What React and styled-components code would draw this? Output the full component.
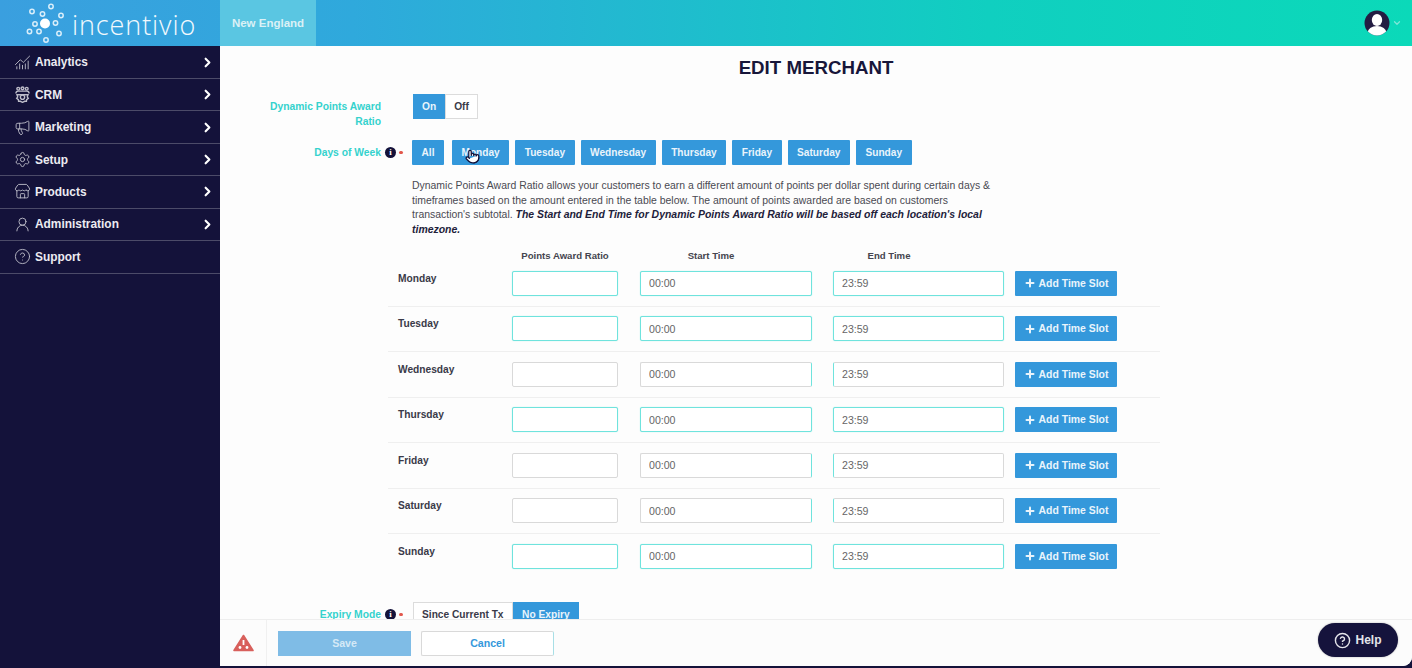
import React from 'react';
import styled, { createGlobalStyle } from 'styled-components';
import {
  ChartNoAxesCombined,
  ChevronDown,
  ChevronRight,
  CircleHelp,
  Megaphone,
  Plus,
  Pointer,
  Settings,
  Store,
  UserRound,
} from 'lucide-react';

const GlobalStyle = createGlobalStyle`
  html, body {
    margin: 0;
    padding: 0;
    height: 100%;
    overflow: hidden;
    background: #14123a;
    font-family: 'Liberation Sans', Arial, sans-serif;
  }
  * { box-sizing: border-box; }
`;

const Shell = styled.div`
  height: 100vh;
  display: flex;
  flex-direction: column;
  background: #14123a;
`;

const TopBar = styled.header`
  height: 46px;
  flex: none;
  display: flex;
  align-items: stretch;
  background: linear-gradient(90deg, #3a9fdf 0%, #2fa9dc 25%, #10cfc0 70%, #0bd9b9 100%);
`;

const LogoBox = styled.div`
  width: 220px;
  display: flex;
  align-items: center;
  padding-left: 24px;
  gap: 2px;
`;

const LogoText = styled.span`
  font-family: 'Open Sans', sans-serif;
  font-weight: 300;
  font-size: 27px;
  letter-spacing: 0.9px;
  color: #f2f9fd;
  position: relative;
  top: 1px;
`;

const RegionTab = styled.div`
  width: 96px;
  display: flex;
  align-items: center;
  justify-content: center;
  background: #5ac6e2;
  color: #dbf1f6;
  font-size: 11.5px;
  font-weight: 700;
`;

const UserMenu = styled.div`
  margin-left: auto;
  padding-right: 10px;
  display: flex;
  align-items: center;
  gap: 2px;
  color: #7fe6d8;
`;

const Body = styled.div`
  flex: 1;
  min-height: 0;
  display: flex;
`;

const Sidebar = styled.nav`
  width: 220px;
  flex: none;
  padding-top: 0.5px;
  background: #14123a;
`;

const NavItem = styled.div`
  height: 32.45px;
  display: flex;
  align-items: center;
  padding: 0 5px 0 14px;
  gap: 4px;
  border-bottom: 1px solid #4c4b68;
  color: #ecebf1;
  font-size: 11.9px;
  font-weight: 700;

  svg.lead {
    color: #bdbcc9;
    flex: none;
  }
`;

const NavLabel = styled.span`
  flex: 1;
`;

const Main = styled.main`
  flex: 1;
  min-width: 0;
  display: flex;
  flex-direction: column;
  position: relative;
  margin-bottom: 2px;
  background: #fdfdfd;
  border-bottom-right-radius: 9px;
  overflow: hidden;
`;

const Content = styled.div`
  flex: 1;
  min-height: 0;
  overflow: hidden;
  padding-top: 12px;
`;

const Title = styled.h1`
  margin: 0 0 16px;
  text-align: center;
  font-size: 18.7px;
  line-height: 20px;
  font-weight: 700;
  color: #17163a;
`;

const FieldRow = styled.div`
  display: grid;
  grid-template-columns: 161px 31px 1fr;
  margin-top: ${(p) => p.$before || 0}px;
  margin-bottom: ${(p) => p.$after || 0}px;
`;

const FieldLabel = styled.label`
  padding: 5px 0 0 45px;
  text-align: right;
  color: #35d2cd;
  font-size: 10.3px;
  font-weight: 700;
  line-height: 15px;
`;

const Marks = styled.div`
  display: flex;
  align-items: center;
  gap: 3px;
  padding-left: 4px;
  height: 25px;
`;

const InfoDot = styled.span`
  width: 11px;
  height: 11px;
  border-radius: 50%;
  background: #14123a;
  color: #fff;
  font-family: 'Liberation Serif', serif;
  font-size: 9px;
  font-weight: 700;
  line-height: 11px;
  text-align: center;
`;

const Required = styled.span`
  width: 3.5px;
  height: 3.5px;
  border-radius: 50%;
  background: #e2574c;
`;

const ButtonRow = styled.div`
  display: flex;
  gap: ${(p) => p.$gap || 0}px;
  margin-left: ${(p) => p.$inset || 0}px;
`;

const Segment = styled.div`
  height: 25px;
  display: flex;
  align-items: center;
  padding: 0 ${(p) => p.$pad || 9}px;
  font-size: 10.2px;
  font-weight: 700;
  background: ${(p) => (p.$active ? '#3498db' : '#fff')};
  color: ${(p) => (p.$active ? '#e9f4fb' : '#3a3a48')};
  border: 1px solid ${(p) => (p.$active ? '#3498db' : '#dcdcdc')};
`;

const DayButton = styled.div`
  position: relative;
  height: 25px;
  display: flex;
  align-items: center;
  padding: 0 9.5px;
  background: #3498db;
  border-radius: 1px;
  color: #e9f4fb;
  font-size: 10.15px;
  font-weight: 700;

  &:first-child {
    margin-right: 2px;
  }
`;

const HandCursor = styled.span`
  position: absolute;
  left: 13px;
  top: 9px;
  display: flex;
  color: #14123a;

  svg {
    fill: #fff;
  }
`;

const Intro = styled.p`
  margin: 14px 0 0 192px;
  width: 590px;
  font-size: 10.45px;
  line-height: 14.6px;
  color: #4a4a52;

  strong {
    font-style: italic;
    color: #22213a;
  }
`;

const Table = styled.div`
  margin: 11px 0 0 168px;
  width: 772px;
`;

const TableHead = styled.div`
  display: grid;
  grid-template-columns: 124px 106px 22px 172px 21px 171px;
  height: 13px;
  padding-top: 2px;
  align-items: center;
  color: #45454f;
  font-size: 9.6px;
  font-weight: 700;
`;

const HeadCell = styled.div`
  grid-column: ${(p) => p.$col};
  text-align: center;
  padding-right: ${(p) => p.$shift || 0}px;
`;

const DayRow = styled.div`
  height: 45.5px;
  padding-top: 9.5px;
  display: grid;
  grid-template-columns: 124px 106px 194px 192px 113px;
  align-items: start;
  border-bottom: 1px solid ${(p) => (p.$last ? 'transparent' : '#efefef')};
`;

const DayName = styled.div`
  padding: 1px 0 0 10px;
  color: #3a3a48;
  font-size: 10.2px;
  line-height: 14px;
  font-weight: 700;
`;

const Cell = styled.div`
  display: flex;
  justify-content: ${(p) => p.$align || 'flex-start'};
`;

const teal = '#6fe3dd';
const grey = '#d9d9d9';

const Field = styled.input`
  width: ${(p) => p.$width}px;
  height: 25px;
  padding: 0 8px;
  background: #fff;
  border: 1px solid ${grey};
  border-top-color: ${(p) => (p.$tone === 'on' ? teal : grey)};
  border-bottom-color: ${(p) => (p.$tone === 'on' ? teal : grey)};
  border-left-color: ${(p) => (p.$tone === 'on' || p.$tone === 'left' ? teal : grey)};
  border-right-color: ${(p) => (p.$tone === 'on' || p.$tone === 'right' ? teal : grey)};
  border-radius: 2px;
  box-shadow: ${(p) => (p.$tone === 'on' ? '0 0 1px rgba(111, 227, 221, 0.8)' : 'none')};
  outline: none;
  font-family: inherit;
  font-size: 10.6px;
  color: #666;
`;

const SlotButton = styled.div`
  width: 102px;
  height: 25px;
  display: flex;
  align-items: center;
  justify-content: center;
  gap: 3px;
  background: #3498db;
  border-radius: 1px;
  color: #e9f4fb;
  font-size: 10.45px;
  font-weight: 700;
`;

const Footer = styled.footer`
  height: 47px;
  flex: none;
  display: flex;
  align-items: center;
  background: #fcfcfc;
  border-top: 1px solid #eeeeee;
`;

const AlertCell = styled.div`
  width: 47px;
  height: 100%;
  display: flex;
  align-items: center;
  justify-content: center;
  border-right: 1px solid #f0f0f0;
`;

const SaveButton = styled.div`
  width: 133px;
  height: 25px;
  margin-left: 11px;
  display: flex;
  align-items: center;
  justify-content: center;
  background: #7fbce6;
  color: #d5e9f6;
  font-size: 10.6px;
  font-weight: 700;
`;

const CancelButton = styled.div`
  width: 133px;
  height: 25px;
  margin-left: 10px;
  display: flex;
  align-items: center;
  justify-content: center;
  background: #fff;
  border: 1px solid #d9d9d9;
  border-right-color: #a8dfe6;
  border-radius: 2px;
  color: #3498db;
  font-size: 10.6px;
  font-weight: 700;
`;

const HelpPill = styled.div`
  position: absolute;
  right: 14px;
  bottom: 9px;
  width: 80px;
  height: 34px;
  display: flex;
  align-items: center;
  justify-content: center;
  gap: 4px;
  border-radius: 17px;
  background: #15133c;
  color: #e4e4ea;
  font-size: 12px;
  font-weight: 700;
  box-shadow: 0 0 2px rgba(0, 0, 0, 0.3);
`;

const Logo = () => (
  <svg width="46" height="44" viewBox="0 0 46 44">
    <circle cx="21" cy="22.5" r="5" fill="#fff" />
    {[
      [27, 5.5], [8, 10.5], [18.5, 13], [37, 14.5], [11, 23],
      [31.5, 22], [5.5, 30.5], [15, 30.5], [35, 32.5], [22, 39],
    ].map(([cx, cy]) => (
      <circle key={`${cx}-${cy}`} cx={cx} cy={cy} r="2.2" fill="none" stroke="#d9eefa" strokeWidth="1.5" />
    ))}
  </svg>
);

const CrmIcon = (props) => (
  <svg viewBox="0 0 16 16" fill="none" stroke="currentColor" strokeWidth="0.9" {...props}>
    <circle cx="4" cy="2.6" r="1.3" />
    <circle cx="8" cy="2.2" r="1.3" />
    <circle cx="12" cy="2.6" r="1.3" />
    <path d="M1.8 7c0-1.5 1-2.2 2.2-2.2h8c1.2 0 2.2.7 2.2 2.2" />
    <path d="M2.8 8.2h10.4l-.7 2 1 1.4-1.6 1.2-.2 1.6H10l-2 1-2-1H4.3l-.2-1.6-1.6-1.2 1-1.4z" />
    <circle cx="8" cy="10.6" r="2" />
  </svg>
);

const Avatar = () => (
  <svg width="26" height="26" viewBox="0 0 26 26">
    <defs>
      <clipPath id="avatar-clip">
        <circle cx="13" cy="13" r="12.5" />
      </clipPath>
    </defs>
    <circle cx="13" cy="13" r="12.5" fill="#231c42" />
    <g clipPath="url(#avatar-clip)" fill="#fff">
      <ellipse cx="13" cy="10" rx="5.2" ry="6" />
      <ellipse cx="13" cy="23" rx="9.5" ry="7" />
    </g>
  </svg>
);

const WarningIcon = () => (
  <svg width="21" height="18" viewBox="0 0 21 18">
    <path d="M10.5 1.5 L20 16.5 H1 Z" fill="#d8605c" stroke="#d8605c" strokeWidth="1.6" strokeLinejoin="round" />
    <path d="M9.6 6h1.8v5H9.6z" fill="#fff" />
    <circle cx="7" cy="13.5" r="1.4" fill="#fff" />
    <circle cx="14" cy="13.5" r="1.4" fill="#fff" />
  </svg>
);

const navItems = [
  { label: 'Analytics', Icon: ChartNoAxesCombined, more: true },
  { label: 'CRM', Icon: CrmIcon, more: true },
  { label: 'Marketing', Icon: Megaphone, more: true },
  { label: 'Setup', Icon: Settings, more: true },
  { label: 'Products', Icon: Store, more: true },
  { label: 'Administration', Icon: UserRound, more: true },
  { label: 'Support', Icon: CircleHelp },
];

const days = ['Monday', 'Tuesday', 'Wednesday', 'Thursday', 'Friday', 'Saturday', 'Sunday'];
const activeDays = ['Monday', 'Tuesday', 'Thursday', 'Sunday'];

const App = () => (
  <Shell>
    <GlobalStyle />
    <TopBar>
      <LogoBox>
        <Logo />
        <LogoText>incentivio</LogoText>
      </LogoBox>
      <RegionTab>New England</RegionTab>
      <UserMenu>
        <Avatar />
        <ChevronDown size={10} strokeWidth={3} />
      </UserMenu>
    </TopBar>
    <Body>
      <Sidebar>
        {navItems.map(({ label, Icon, more }) => (
          <NavItem key={label}>
            <Icon className="lead" width={17} height={17} strokeWidth={1.3} />
            <NavLabel>{label}</NavLabel>
            {more && <ChevronRight size={15} strokeWidth={3.4} color="#fff" />}
          </NavItem>
        ))}
      </Sidebar>
      <Main>
        <Content>
          <Title>EDIT MERCHANT</Title>
          <FieldRow $after={11}>
            <FieldLabel>Dynamic Points Award Ratio</FieldLabel>
            <span />
            <ButtonRow $inset={1}>
              <Segment $active $pad={8}>On</Segment>
              <Segment $pad={8}>Off</Segment>
            </ButtonRow>
          </FieldRow>
          <FieldRow>
            <FieldLabel>Days of Week</FieldLabel>
            <Marks>
              <InfoDot>i</InfoDot>
              <Required />
            </Marks>
            <ButtonRow $gap={6}>
              <DayButton>All</DayButton>
              {days.map((day) => (
                <DayButton key={day}>
                  {day}
                  {day === 'Monday' && (
                    <HandCursor>
                      <Pointer size={15} strokeWidth={2} />
                    </HandCursor>
                  )}
                </DayButton>
              ))}
            </ButtonRow>
          </FieldRow>
          <Intro>
            Dynamic Points Award Ratio allows your customers to earn a different amount of points per dollar spent during certain days &amp; timeframes based on the amount entered in the table below. The amount of points awarded are based on customers transaction's subtotal.{' '}
            <strong>The Start and End Time for Dynamic Points Award Ratio will be based off each location's local timezone.</strong>
          </Intro>
          <Table>
            <TableHead>
              <HeadCell $col={2}>Points Award Ratio</HeadCell>
              <HeadCell $col={4} $shift={30}>Start Time</HeadCell>
              <HeadCell $col={6} $shift={59}>End Time</HeadCell>
            </TableHead>
            {days.map((day, i) => {
              const active = activeDays.includes(day);
              return (
                <DayRow key={day} $last={i === days.length - 1}>
                  <DayName>{day}</DayName>
                  <Cell>
                    <Field $width={106} $tone={active ? 'on' : 'off'} readOnly />
                  </Cell>
                  <Cell $align="flex-end">
                    <Field $width={172} $tone={active ? 'on' : 'right'} defaultValue="00:00" readOnly />
                  </Cell>
                  <Cell $align="flex-end">
                    <Field $width={171} $tone={active ? 'on' : 'left'} defaultValue="23:59" readOnly />
                  </Cell>
                  <Cell $align="flex-end">
                    <SlotButton>
                      <Plus size={12} strokeWidth={4} />
                      Add Time Slot
                    </SlotButton>
                  </Cell>
                </DayRow>
              );
            })}
          </Table>
          <FieldRow $before={22}>
            <FieldLabel>Expiry Mode</FieldLabel>
            <Marks>
              <InfoDot>i</InfoDot>
              <Required />
            </Marks>
            <ButtonRow $inset={1}>
              <Segment $pad={8}>Since Current Tx</Segment>
              <Segment $active $pad={8.5}>No Expiry</Segment>
            </ButtonRow>
          </FieldRow>
        </Content>
        <Footer>
          <AlertCell>
            <WarningIcon />
          </AlertCell>
          <SaveButton>Save</SaveButton>
          <CancelButton>Cancel</CancelButton>
        </Footer>
        <HelpPill>
          <CircleHelp size={17} strokeWidth={2} />
          Help
        </HelpPill>
      </Main>
    </Body>
  </Shell>
);

export default App;
